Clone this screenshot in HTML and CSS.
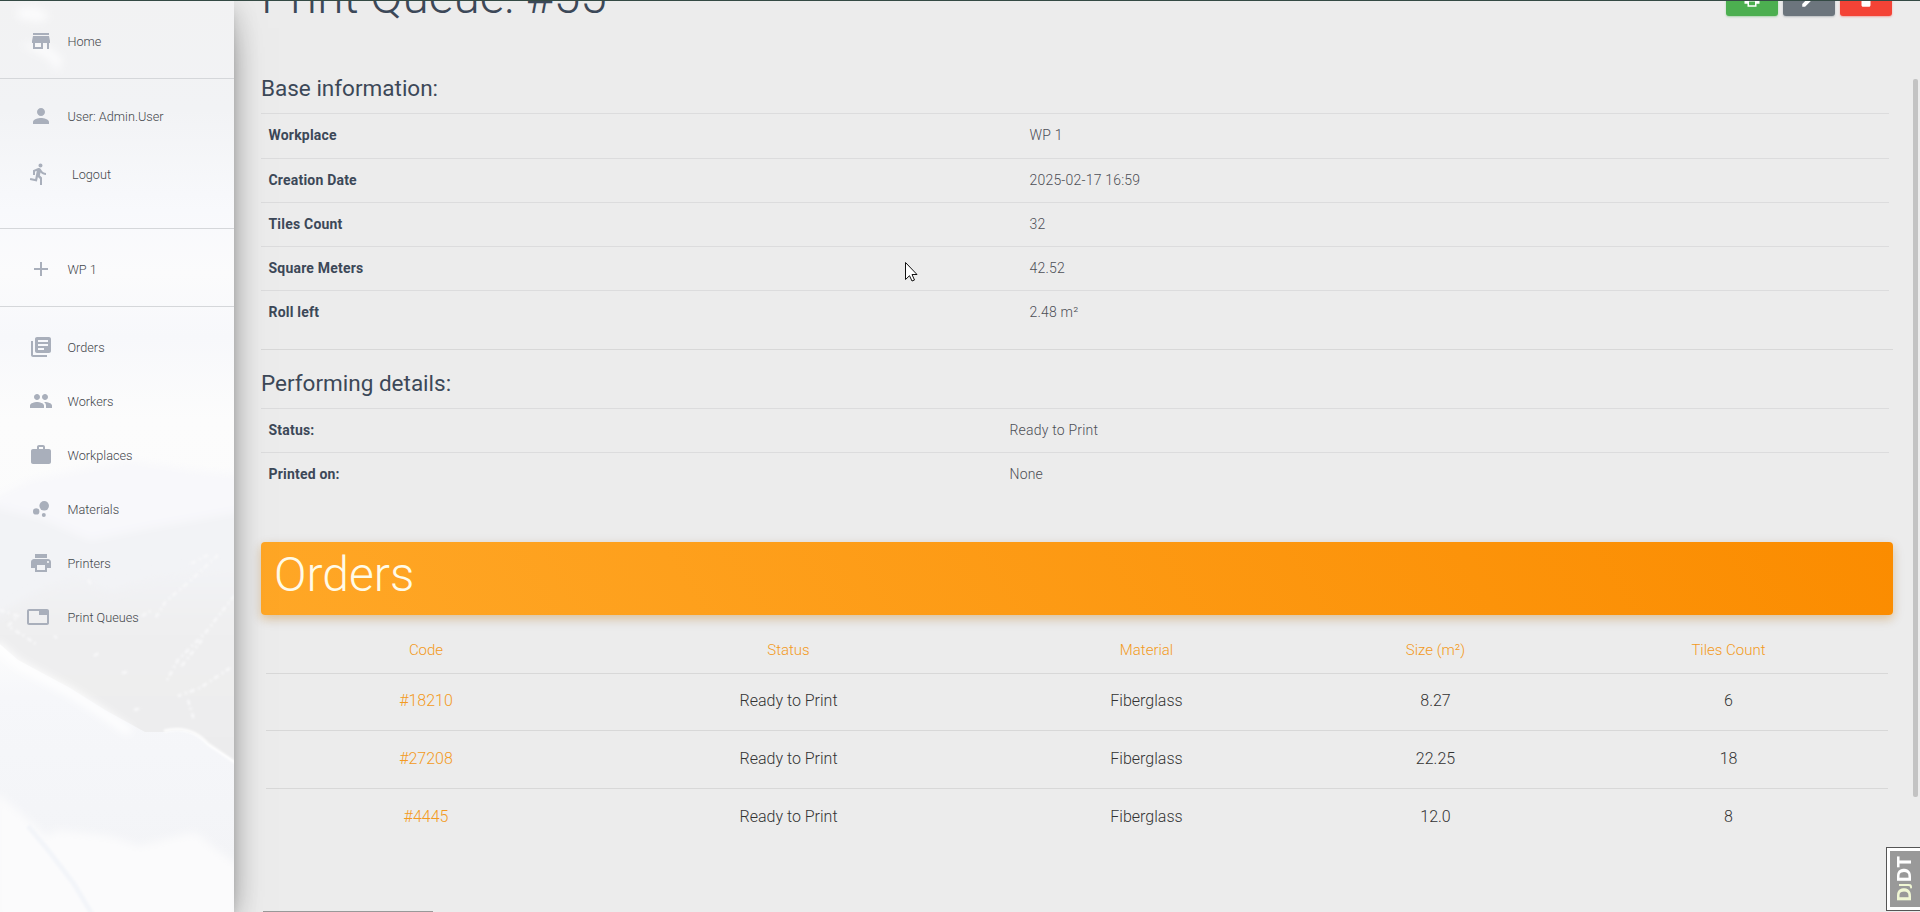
FILE: index.html
```html
<!DOCTYPE html>
<html lang="en">
<head>
<meta charset="utf-8">
<title>Print Queue: #55</title>
<link rel="stylesheet" href="styles.css">
</head>
<body>
<div class="app">
  <aside class="sidebar">
    <svg class="scenery" viewBox="0 0 234 912" preserveAspectRatio="none" aria-hidden="true">
      <defs>
        <linearGradient id="sky" x1="0" y1="0" x2="0" y2="1">
          <stop offset="0" stop-color="#f2f2f3"/><stop offset=".12" stop-color="#f2f3f5"/><stop offset=".23" stop-color="#f8f9fc"/>
          <stop offset=".3" stop-color="#fbfbfc"/><stop offset=".37" stop-color="#f7f8fb"/><stop offset=".46" stop-color="#fcfcfc"/><stop offset="1" stop-color="#f8f9fb"/>
        </linearGradient>
        <linearGradient id="rock" x1="0" y1="0" x2="0" y2="1">
          <stop offset="0" stop-color="#f3f4f7"/><stop offset=".3" stop-color="#efeff0"/><stop offset="1" stop-color="#ebebec"/>
        </linearGradient>
        <linearGradient id="snow" x1="0" y1="0" x2="0" y2="1">
          <stop offset="0" stop-color="#fdfdfd"/><stop offset=".2" stop-color="#f6f7fa"/><stop offset="1" stop-color="#f2f3f6"/>
        </linearGradient>
        <filter id="soft3" x="-20%" y="-20%" width="140%" height="140%"><feGaussianBlur stdDeviation="4"/></filter>
        <filter id="soft1" x="-20%" y="-20%" width="140%" height="140%"><feGaussianBlur stdDeviation="1.2"/></filter>
      </defs>
      <rect width="234" height="912" fill="url(#sky)"/>
      <g filter="url(#soft3)">
        <path d="M18 8l20 0 12 8-10 6-22-4zM20 44l24 0 18 14-4 14-10-14z" fill="#fcfcfd"/>
        <path d="M-10 500L30 480 80 470 130 460 190 470 250 476V640H-10z" fill="#f8f8fb"/>
        <path d="M-10 506L40 518 90 540 150 528 250 510V660H-10z" fill="#f2f3f6"/>
      </g>
      <path d="M-10 620L40 590 76 574 110 592 160 574 206 566 250 556V790H-10z" fill="url(#rock)" filter="url(#soft3)"/>
      <g class="ridges" filter="url(#soft1)">
        <path d="M218 555l-28 26-24 20-10 16M234 596l-28 36-28 28-12 22M230 668l-30 20-22 8M202 640l-22 28M188 700l6 20M208 555l-20 10M142 616l10-6M88 580l4 6M0 610l18 6-10 10 16 10 12 8M54 636l3 2M94 656l5-3M122 673l5-1M134 710l8-2"/>
      </g>
      <path d="M-5 640L18 660 70 688 105 710 145 732 165 732Q190 726 208 744L239 764V920H-5z" fill="url(#snow)"/>
      <path d="M-5 644L18 664 70 692 100 711 130 732" class="crest" filter="url(#soft3)"/>
      <path d="M164 731Q190 724 208 744L236 763" class="crest crest-thin" filter="url(#soft1)"/>
      <path d="M-5 792L20 812 46 836 58 830 110 836 140 846 170 838 195 832 215 848 239 866V920H-5z" fill="#fbfbfc" filter="url(#soft3)"/>
      <path d="M28 826L48 850 74 884 92 914" class="track" filter="url(#soft1)"/>
    </svg>
    <nav class="menu">
      <ul class="group group-home">
        <li><svg class="icon" viewBox="0 0 24 24"><path d="M20 4H4v2h16V4zm1 10v-2l-1-5H4l-1 5v2h1v6h10v-6h4v6h2v-6h1zm-9 4H6v-4h6v4z"/></svg><span>Home</span></li>
      </ul>
      <ul class="group group-user">
        <li class="user"><svg class="icon" viewBox="0 0 24 24"><path d="M12 12c2.21 0 4-1.79 4-4s-1.79-4-4-4-4 1.79-4 4 1.79 4 4 4zm0 2c-2.67 0-8 1.34-8 4v2h16v-2c0-2.66-5.33-4-8-4z"/></svg><span>User: Admin.User</span></li>
        <li class="logout"><svg class="icon" viewBox="0 0 24 24"><path d="M13.49 5.48c1.1 0 2-.9 2-2s-.9-2-2-2-2 .9-2 2 .9 2 2 2zm-3.6 13.9l1-4.4 2.1 2v6h2v-7.500l-2.100-2 .6-3c1.300 1.500 3.300 2.500 5.500 2.500v-2c-1.900 0-3.500-1-4.300-2.400l-1-1.600c-.4-.6-1-1-1.700-1-.3 0-.5.1-.8.1l-5.200 2.200v4.700h2v-3.400l1.800-.7-1.600 8.100-4.900-1-.4 2 7 1.400z"/></svg><span>Logout</span></li>
      </ul>
      <ul class="group group-place">
        <li><svg class="icon" viewBox="0 0 24 24"><path d="M19 13h-6v6h-2v-6H5v-2h6V5h2v6h6v2z"/></svg><span>WP 1</span></li>
      </ul>
      <ul class="group group-main">
        <li><svg class="icon" viewBox="0 0 24 24"><path d="M4 6H2v14c0 1.100.9 2 2 2h14v-2H4V6zm16-4H8c-1.100 0-2 .9-2 2v12c0 1.100.9 2 2 2h12c1.100 0 2-.9 2-2V4c0-1.100-.9-2-2-2zm-1 9H9V9h10v2zm-4 4H9v-2h6v2zm4-8H9V5h10v2z"/></svg><span>Orders</span></li>
        <li><svg class="icon" viewBox="0 0 24 24"><path d="M16 11c1.660 0 2.990-1.340 2.990-3S17.660 5 16 5s-3 1.340-3 3 1.340 3 3 3zm-8 0c1.660 0 2.990-1.340 2.990-3S9.660 5 8 5 5 6.340 5 8s1.340 3 3 3zm0 2c-2.330 0-7 1.170-7 3.500V19h14v-2.500c0-2.330-4.670-3.500-7-3.500zm8 0c-.29 0-.62.020-.97.050 1.160.84 1.970 1.970 1.970 3.450V19h6v-2.500c0-2.330-4.670-3.500-7-3.500z"/></svg><span>Workers</span></li>
        <li><svg class="icon" viewBox="0 0 24 24"><path d="M20 6h-4V4c0-1.110-.89-2-2-2h-4c-1.110 0-2 .89-2 2v2H4c-1.110 0-1.990.89-1.990 2L2 19c0 1.110.89 2 2 2h16c1.110 0 2-.89 2-2V8c0-1.110-.89-2-2-2zm-6 0h-4V4h4v2z"/></svg><span>Workplaces</span></li>
        <li><svg class="icon" viewBox="0 0 24 24"><circle cx="7.200" cy="14.400" r="3.200"/><circle cx="14.800" cy="18" r="2"/><circle cx="15.200" cy="8.800" r="4.800"/></svg><span>Materials</span></li>
        <li><svg class="icon" viewBox="0 0 24 24"><path d="M19 8H5c-1.660 0-3 1.340-3 3v6h4v4h12v-4h4v-6c0-1.660-1.340-3-3-3zm-3 11H8v-5h8v5zm3-7c-.55 0-1-.45-1-1s.45-1 1-1 1 .45 1 1-.45 1-1 1zm-1-9H6v4h12V3z"/></svg><span>Printers</span></li>
        <li class="queues"><svg class="icon" viewBox="0 0 24 24"><path d="M21 4H3c-1.100 0-2 .9-2 2v12c0 1.100.9 2 2 2h18c1.100 0 2-.9 2-2V6c0-1.100-.9-2-2-2zm0 14H3V6h10v4h8v8z"/></svg><span>Print Queues</span></li>
      </ul>
    </nav>
  </aside>

  <main class="content">
    <header class="page-head">
      <h1 class="page-title">Print Queue: #55</h1>
      <div class="actions">
        <button class="btn btn-print"><svg viewBox="0 0 24 24"><path d="M19 8H5c-1.660 0-3 1.340-3 3v6h4v4h12v-4h4v-6c0-1.660-1.340-3-3-3zm-3 11H8v-5h8v5zM18 3H6v4h12V3z"/></svg></button>
        <button class="btn btn-edit"><svg viewBox="0 0 24 24"><path d="M3 17.250V21h3.750L17.810 9.940l-3.750-3.750L3 17.250zM20.710 7.040c.39-.39.39-1.020 0-1.410l-2.340-2.340c-.39-.39-1.020-.39-1.410 0l-1.830 1.830 3.750 3.750 1.830-1.830z"/></svg></button>
        <button class="btn btn-delete"><svg viewBox="0 0 24 24"><path d="M6 19c0 1.100.9 2 2 2h8c1.100 0 2-.9 2-2V7H6v12zM19 4h-3.500l-1-1h-5l-1 1H5v2h14V4z"/></svg></button>
      </div>
    </header>

    <h3 class="section-title">Base information:</h3>
    <dl class="details details-base">
      <div><dt>Workplace</dt><dd>WP 1</dd></div>
      <div><dt>Creation Date</dt><dd>2025-02-17 16:59</dd></div>
      <div><dt>Tiles Count</dt><dd>32</dd></div>
      <div><dt>Square Meters</dt><dd>42.52</dd></div>
      <div><dt>Roll left</dt><dd>2.48 m²</dd></div>
    </dl>
    <hr class="rule">
    <h3 class="section-title">Performing details:</h3>
    <dl class="details details-run">
      <div><dt>Status:</dt><dd>Ready to Print</dd></div>
      <div><dt>Printed on:</dt><dd>None</dd></div>
    </dl>

    <h2 class="banner">Orders</h2>
    <table class="orders">
      <colgroup><col class="c-code"><col class="c-status"><col class="c-material"><col class="c-size"><col class="c-count"></colgroup>
      <thead><tr><th>Code</th><th>Status</th><th>Material</th><th>Size (m²)</th><th>Tiles Count</th></tr></thead>
      <tbody>
        <tr><td><a>#18210</a></td><td>Ready to Print</td><td>Fiberglass</td><td>8.27</td><td>6</td></tr>
        <tr><td><a>#27208</a></td><td>Ready to Print</td><td>Fiberglass</td><td>22.25</td><td>18</td></tr>
        <tr><td><a>#4445</a></td><td>Ready to Print</td><td>Fiberglass</td><td>12.0</td><td>8</td></tr>
      </tbody>
    </table>
    <button class="more"></button>
  </main>
  <div class="top-edge"></div>
  <div class="scroll-thumb"></div>
  <div class="debug-handle"><div class="debug-label"><span class="dj">D<small>J</small></span>DT</div></div>
  <svg class="pointer" viewBox="0 0 13 20"><path d="M.5.5v17l4-3.800 2.500 5.300 2.500-1-2.500-5.500h5z"/></svg>
</div>
</body>
</html>
```
FILE: styles.css
```css
* { box-sizing: border-box; }
body { margin: 0; font-family: Roboto, "Liberation Sans", sans-serif; font-weight: 300; background: #ececec; color: #3c4858; }
.app { position: relative; display: flex; width: 1920px; height: 912px; overflow: hidden; }

.sidebar { position: relative; z-index: 1; flex: 0 0 234px; height: 912px; background: #fafafa; box-shadow: 0 16px 38px -12px rgba(0,0,0,.56), 0 4px 25px 0 rgba(0,0,0,.12), 0 8px 10px -5px rgba(0,0,0,.2); }
.scenery { position: absolute; inset: 0; width: 234px; height: 912px; }
.ridges path { fill: none; stroke: #f8f8f9; stroke-width: 2.500; stroke-dasharray: 5 3 2 4; }
.crest { fill: none; stroke: #fff; stroke-width: 8; }
.crest-thin { stroke-width: 2.500; }
.track { fill: none; stroke: #f3f5f9; stroke-width: 5; }

.menu { position: relative; font-size: 12.700px; color: #44474c; }
.group { list-style: none; margin: 0; padding: 0; border-bottom: 1px solid #d5d7da; }
.group li { display: flex; align-items: center; gap: 14.500px; height: 54px; padding-left: 29px; }
.icon { width: 24px; height: 24px; fill: #a9afbb; flex: none; }
.group-home { height: 79px; padding-top: 14px; }
.group-user { height: 150px; padding-top: 10px; }
.group .logout { margin-top: 4px; padding-left: 27px; gap: 21px; }
.group-place { height: 78px; padding-top: 13px; }
.group-main { padding-top: 13px; border-bottom: 0; }
.group .queues { padding-left: 26px; gap: 17.500px; }

.content { flex: 1; padding: 0 27px; }
.page-head { display: flex; justify-content: space-between; align-items: flex-start; height: 70px; }
.page-title { margin: -31px 0 0; font-size: 47.700px; font-weight: 300; line-height: 56px; }
.actions { display: flex; gap: 5px; margin: -24px 1px 0 0; }
.btn { display: flex; align-items: center; justify-content: center; width: 52px; height: 40px; padding: 7px 0 0; border: 0; border-radius: 3px; }
.btn svg { width: 18px; height: 18px; fill: #fff; }
.btn-print { background: #4caf50; box-shadow: 0 1px 2px rgba(76,175,80,.4); }
.btn-edit { background: #6c757d; box-shadow: 0 1px 2px rgba(108,117,125,.4); }
.btn-delete { background: #f44336; box-shadow: 0 1px 2px rgba(244,67,54,.4); }

.section-title { margin: 0; height: 43px; font-size: 22.500px; font-weight: 400; line-height: 36px; }
.details { margin: 0 4px 0 0; font-size: 14px; letter-spacing: .2px; }
.details > div { display: grid; align-items: center; height: 44px; border-top: 1px solid #dcdcdd; padding: 0 0 1px 7.500px; }
.details-base > div { grid-template-columns: 761px 1fr; }
.details-base > div:first-child { height: 45px; padding-bottom: 2px; }
.details-run > div { grid-template-columns: 741px 1fr; }
.details dt { font-weight: 700; }
.details dd { margin: 0; color: #4c4f56; }
.rule { height: 1px; margin: 15px 0; border: 0; background: #d8d8d8; }

.banner { height: 73px; margin: 46px 0 0; padding: 0 13px; border-radius: 4px; background: linear-gradient(60deg, #ffa726, #fb8c00); box-shadow: 0 4px 14px rgba(0,0,0,.1), 0 4px 8px rgba(255,152,0,.25); color: #fffbe8; font-size: 48px; font-weight: 300; line-height: 66px; }
.orders { width: 1622px; margin-left: 5px; border-collapse: collapse; table-layout: fixed; text-align: center; font-size: 16px; color: #333; }
.c-code { width: 320px; }
.c-status { width: 405px; }
.c-material { width: 311px; }
.c-size { width: 267px; }
.orders th { height: 58px; padding: 13px 0 0; font-size: 15px; font-weight: 300; color: #f39a22; }
.orders td { height: 57.500px; padding: 0 0 2px; border-top: 1px solid #d8d8d8; }
.orders a { color: #f39a22; }
.more { display: block; width: 170px; height: 40px; margin: 65px 0 0 2px; border: 0; background: #999; }

.top-edge { position: absolute; z-index: 2; inset: 0 0 auto; height: 1px; background: #344a44; }
.scroll-thumb { position: absolute; left: 1913px; top: 79px; width: 5px; height: 718px; border-radius: 2px; background: #c3c3c3; }
.debug-handle { position: absolute; left: 1886px; top: 847px; width: 36px; height: 64px; border: 1px solid #555; background: #fff; padding: 3px; }
.debug-label { width: 32px; height: 56px; background: #999; color: #fff; font: 700 20px/28px "Open Sans", sans-serif; writing-mode: vertical-rl; transform: rotate(180deg); text-align: center; }
.dj { color: #f0f7d4; }
.dj small { font-size: 14px; }
.pointer { position: absolute; left: 905px; top: 262px; width: 13px; height: 20px; fill: #fff; stroke: #111; stroke-width: 1; }
```
